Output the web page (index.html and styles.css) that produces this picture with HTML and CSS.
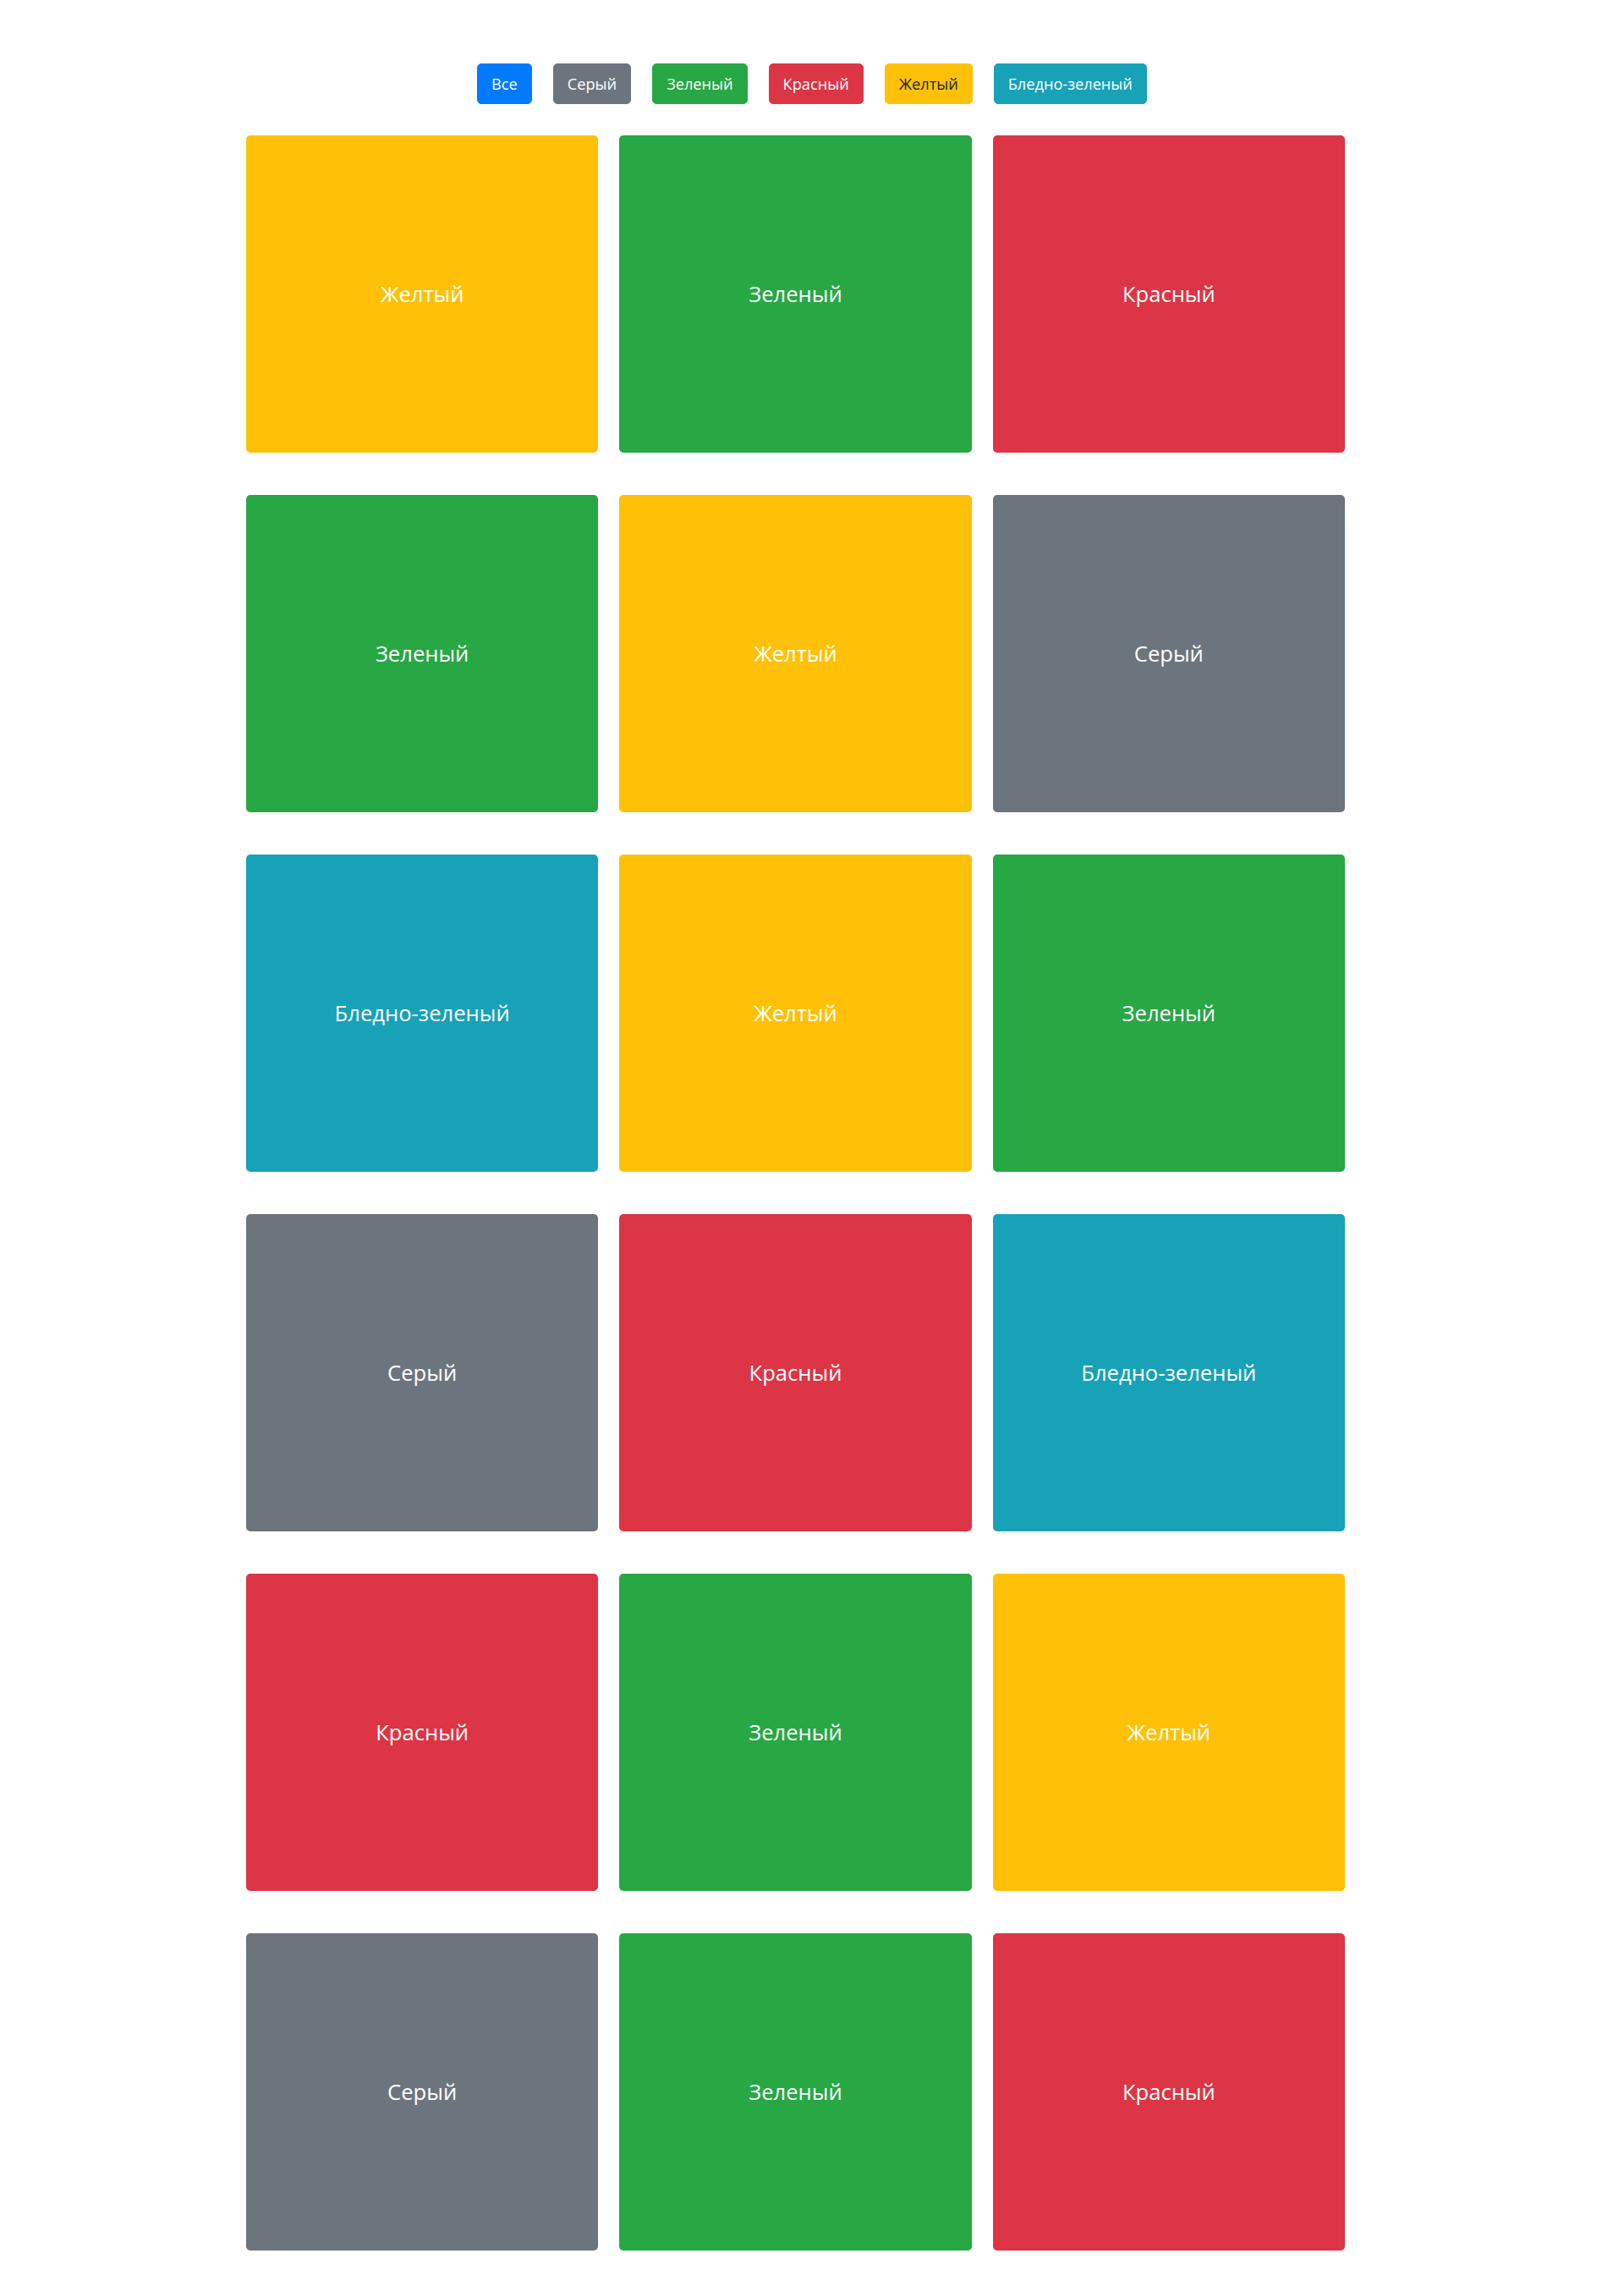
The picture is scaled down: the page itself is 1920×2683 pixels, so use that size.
FILE: index.html
```html
<!DOCTYPE html>
<html lang="ru">
<head>
<meta charset="utf-8">
<title>Фильтр</title>
<link rel="stylesheet" href="styles.css">
</head>
<body>
<div class="filters">
  <button class="btn btn-primary">Все</button>
  <button class="btn btn-secondary">Серый</button>
  <button class="btn btn-success">Зеленый</button>
  <button class="btn btn-danger">Красный</button>
  <button class="btn btn-warning">Желтый</button>
  <button class="btn btn-info">Бледно-зеленый</button>
</div>
<div class="grid">
  <div class="card bg-warning">Желтый</div>
  <div class="card bg-success">Зеленый</div>
  <div class="card bg-danger">Красный</div>
  <div class="card bg-success">Зеленый</div>
  <div class="card bg-warning">Желтый</div>
  <div class="card bg-secondary">Серый</div>
  <div class="card bg-info">Бледно-зеленый</div>
  <div class="card bg-warning">Желтый</div>
  <div class="card bg-success">Зеленый</div>
  <div class="card bg-secondary">Серый</div>
  <div class="card bg-danger">Красный</div>
  <div class="card bg-info">Бледно-зеленый</div>
  <div class="card bg-danger">Красный</div>
  <div class="card bg-success">Зеленый</div>
  <div class="card bg-warning">Желтый</div>
  <div class="card bg-secondary">Серый</div>
  <div class="card bg-success">Зеленый</div>
  <div class="card bg-danger">Красный</div>
</div>
</body>
</html>
```
FILE: styles.css
```css
html, body {
  margin: 0;
  padding: 0;
  background: #fff;
}
body {
  font-family: "Open Sans", "Noto Sans", sans-serif;
  color: #212529;
}
.filters {
  display: flex;
  justify-content: center;
  gap: 25px;
  padding-top: 75px;
}
.btn {
  font-family: inherit;
  font-size: 18.2px;
  line-height: 30px;
  padding: 8px 16px;
  border: 1px solid transparent;
  border-radius: 5px;
  color: #fff;
  cursor: pointer;
  min-height: 48px;
}
.btn-primary { background: #007bff; border-color: #007bff; }
.btn-secondary { background: #6c757d; border-color: #6c757d; }
.btn-success { background: #28a745; border-color: #28a745; }
.btn-danger { background: #dc3545; border-color: #dc3545; }
.btn-warning { background: #ffc107; border-color: #ffc107; color: #212529; }
.btn-info { background: #17a2b8; border-color: #17a2b8; }

.grid {
  width: 1299px;
  margin: 37px 0 0 291px;
  display: grid;
  grid-template-columns: repeat(3, 1fr);
  column-gap: 25px;
  row-gap: 50px;
}
.card {
  height: 375px;
  border-radius: 5px;
  display: flex;
  align-items: center;
  justify-content: center;
  color: #fff;
  font-size: 25.6px;
}
.bg-secondary { background: #6c757d; }
.bg-success { background: #28a745; }
.bg-danger { background: #dc3545; }
.bg-warning { background: #ffc107; }
.bg-info { background: #17a2b8; }
```
